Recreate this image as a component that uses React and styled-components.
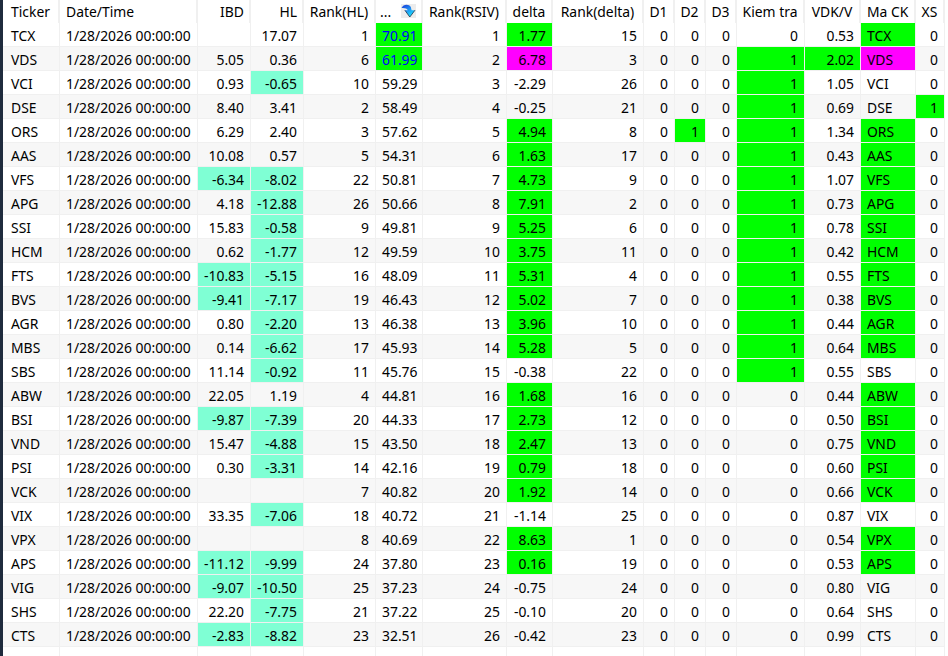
import styled, { createGlobalStyle } from "styled-components";

const GREEN = "#00ff00";
const AQUA = "#7fffd4";
const MAGENTA = "#ff00ff";
const LINE = "#f0f0f0";

const COLUMNS = [57, 138, 53, 53, 72, 47, 84, 46, 91, 31, 31, 31, 68, 56, 55, 29];

// ticker, ibd, hl, rankHl, rsi, rankRsi, delta, rankDelta, d2, kiemTra, vdk, xs
const ROWS = [
  ["TCX", "", "17.07", 1, "70.91", 1, "1.77", 15, 0, 0, "0.53", 0],
  ["VDS", "5.05", "0.36", 6, "61.99", 2, "6.78", 3, 0, 1, "2.02", 0],
  ["VCI", "0.93", "-0.65", 10, "59.29", 3, "-2.29", 26, 0, 1, "1.05", 0],
  ["DSE", "8.40", "3.41", 2, "58.49", 4, "-0.25", 21, 0, 1, "0.69", 1],
  ["ORS", "6.29", "2.40", 3, "57.62", 5, "4.94", 8, 1, 1, "1.34", 0],
  ["AAS", "10.08", "0.57", 5, "54.31", 6, "1.63", 17, 0, 1, "0.43", 0],
  ["VFS", "-6.34", "-8.02", 22, "50.81", 7, "4.73", 9, 0, 1, "1.07", 0],
  ["APG", "4.18", "-12.88", 26, "50.66", 8, "7.91", 2, 0, 1, "0.73", 0],
  ["SSI", "15.83", "-0.58", 9, "49.81", 9, "5.25", 6, 0, 1, "0.78", 0],
  ["HCM", "0.62", "-1.77", 12, "49.59", 10, "3.75", 11, 0, 1, "0.42", 0],
  ["FTS", "-10.83", "-5.15", 16, "48.09", 11, "5.31", 4, 0, 1, "0.55", 0],
  ["BVS", "-9.41", "-7.17", 19, "46.43", 12, "5.02", 7, 0, 1, "0.38", 0],
  ["AGR", "0.80", "-2.20", 13, "46.38", 13, "3.96", 10, 0, 1, "0.44", 0],
  ["MBS", "0.14", "-6.62", 17, "45.93", 14, "5.28", 5, 0, 1, "0.64", 0],
  ["SBS", "11.14", "-0.92", 11, "45.76", 15, "-0.38", 22, 0, 1, "0.55", 0],
  ["ABW", "22.05", "1.19", 4, "44.81", 16, "1.68", 16, 0, 0, "0.44", 0],
  ["BSI", "-9.87", "-7.39", 20, "44.33", 17, "2.73", 12, 0, 0, "0.50", 0],
  ["VND", "15.47", "-4.88", 15, "43.50", 18, "2.47", 13, 0, 0, "0.75", 0],
  ["PSI", "0.30", "-3.31", 14, "42.16", 19, "0.79", 18, 0, 0, "0.60", 0],
  ["VCK", "", "", 7, "40.82", 20, "1.92", 14, 0, 0, "0.66", 0],
  ["VIX", "33.35", "-7.06", 18, "40.72", 21, "-1.14", 25, 0, 0, "0.87", 0],
  ["VPX", "", "", 8, "40.69", 22, "8.63", 1, 0, 0, "0.54", 0],
  ["APS", "-11.12", "-9.99", 24, "37.80", 23, "0.16", 19, 0, 0, "0.53", 0],
  ["VIG", "-9.07", "-10.50", 25, "37.23", 24, "-0.75", 24, 0, 0, "0.80", 0],
  ["SHS", "22.20", "-7.75", 21, "37.22", 25, "-0.10", 20, 0, 0, "0.64", 0],
  ["CTS", "-2.83", "-8.82", 23, "32.51", 26, "-0.42", 23, 0, 0, "0.99", 0],
];

const negative = (v) => (v !== "" && parseFloat(v) < 0 ? AQUA : undefined);
const flag = (v) => (v === 1 ? GREEN : undefined);
const deltaColor = (v, ticker) => {
  if (ticker === "VDS") return MAGENTA;
  return parseFloat(v) > 0 ? GREEN : undefined;
};

function SortIcon() {
  return (
    <SortBox>
      <svg width="15" height="14" viewBox="0 0 15 14">
        <defs>
          <linearGradient id="sortGrad" x1="0" y1="0" x2="0.6" y2="1">
            <stop offset="0" stopColor="#1a35d8" />
            <stop offset="0.5" stopColor="#1f8cf0" />
            <stop offset="1" stopColor="#18e4ff" />
          </linearGradient>
        </defs>
        <path
          d="M0.5 4 C2 0 8 -0.5 9.8 3 L10.6 6.2 L14 6.2 L8.8 13 L3.8 6.2 L6.8 6.2 C6 4.4 3.4 3.6 0.5 4 Z"
          fill="url(#sortGrad)"
        />
        <path d="M14 6.2 L8.8 13 L3.8 6.2" fill="none" stroke="#20304a" strokeWidth="0.8" />
      </svg>
    </SortBox>
  );
}

function App() {
  return (
    <>
      <GlobalStyle />
      <Page>
        <Stripe />
        <Grid>
          <colgroup>
            {COLUMNS.map((w, i) => (
              <col key={i} style={{ width: w }} />
            ))}
          </colgroup>
          <thead>
            <tr>
              <Head $left="8px">Ticker</Head>
              <Head $left="6px">Date/Time</Head>
              <Head $align="right">IBD</Head>
              <Head $align="right">HL</Head>
              <Head $align="center">Rank(HL)</Head>
              <Head $left="4px">
                ...
                <SortIcon />
              </Head>
              <Head $align="center">Rank(RSIV)</Head>
              <Head $align="center">delta</Head>
              <Head $align="center">Rank(delta)</Head>
              <Head $align="center">D1</Head>
              <Head $align="center">D2</Head>
              <Head $align="center">D3</Head>
              <Head $align="center">Kiem tra</Head>
              <Head $align="center">VDK/V</Head>
              <Head $left="6px">Ma CK</Head>
              <Head $align="center">XS</Head>
            </tr>
          </thead>
          <tbody>
            {ROWS.map((r) => {
              const [ticker, ibd, hl, rankHl, rsi, rankRsi, delta, rankDelta, d2, kiemTra, vdk, xs] = r;
              const dc = deltaColor(delta, ticker);
              return (
                <Row key={ticker}>
                  <Cell $first>{ticker}</Cell>
                  <Cell>1/28/2026 00:00:00</Cell>
                  <Cell $align="right" $bg={negative(ibd)}>{ibd}</Cell>
                  <Cell $align="right" $bg={negative(hl)}>{hl}</Cell>
                  <Cell $align="right">{rankHl}</Cell>
                  <Cell
                    $align="right"
                    $bg={parseFloat(rsi) > 60 ? GREEN : undefined}
                    $color={parseFloat(rsi) > 60 ? "#0000ff" : undefined}
                  >
                    {rsi}
                  </Cell>
                  <Cell $align="right">{rankRsi}</Cell>
                  <Cell $align="right" $bg={dc}>{delta}</Cell>
                  <Cell $align="right">{rankDelta}</Cell>
                  <Cell $align="right">0</Cell>
                  <Cell $align="right" $bg={flag(d2)}>{d2}</Cell>
                  <Cell $align="right">0</Cell>
                  <Cell $align="right" $bg={flag(kiemTra)}>{kiemTra}</Cell>
                  <Cell $align="right" $bg={parseFloat(vdk) >= 2 ? GREEN : undefined}>{vdk}</Cell>
                  <Cell $bg={dc}>{ticker}</Cell>
                  <Cell $align="right" $bg={flag(xs)}>{xs}</Cell>
                </Row>
              );
            })}
            <FillerRow>
              {COLUMNS.map((w, i) => (
                <FillerCell key={i} />
              ))}
            </FillerRow>
          </tbody>
        </Grid>
      </Page>
    </>
  );
}

export default App;

const GlobalStyle = createGlobalStyle`
  html, body {
    margin: 0;
    padding: 0;
    background: #ffffff;
    overflow: hidden;
  }
`;

const Page = styled.div`
  display: flex;
  width: 948px;
  height: 656px;
  overflow: hidden;
  font-family: "Noto Sans", "Open Sans", sans-serif;
  font-size: 13.9px;
  color: #000000;
`;

const Stripe = styled.div`
  flex: none;
  width: 3px;
  background: #1f2b3d;
`;

const Grid = styled.table`
  flex: none;
  width: 942px;
  height: 633px;
  table-layout: fixed;
  border-collapse: separate;
  border-spacing: 0;
`;

const Head = styled.th`
  height: 23px;
  padding: 0 ${({ $align }) => ($align === "right" ? "5px" : "0")} 0 ${({ $left }) => $left || "0"};
  box-sizing: border-box;
  position: relative;
  font-weight: 400;
  text-align: ${({ $align }) => $align || "left"};
  white-space: nowrap;
  overflow: hidden;
  background: #ffffff;
  border-right: 2px solid ${LINE};
`;

const SortBox = styled.span`
  position: absolute;
  left: 25px;
  top: 4px;
  width: 15px;
  height: 14px;
  background: #ececec;
  line-height: 0;
`;

const Row = styled.tr`
  height: 24px;
  background: #ffffff;

  &:nth-child(even) {
    background: #f7f7f7;
  }
`;

const Cell = styled.td`
  height: 24px;
  padding: 1px 6px 0 ${({ $first }) => ($first ? "8px" : "6px")};
  box-sizing: border-box;
  text-align: ${({ $align }) => $align || "left"};
  white-space: nowrap;
  overflow: hidden;
  background: ${({ $bg }) => $bg || "transparent"};
  color: ${({ $color }) => $color || "inherit"};
  border-right: 1px solid ${LINE};
  border-bottom: 1px solid ${LINE};
`;

const FillerRow = styled.tr`
  height: 10px;
`;

const FillerCell = styled.td`
  padding: 0;
  border-right: 1px solid ${LINE};
`;
